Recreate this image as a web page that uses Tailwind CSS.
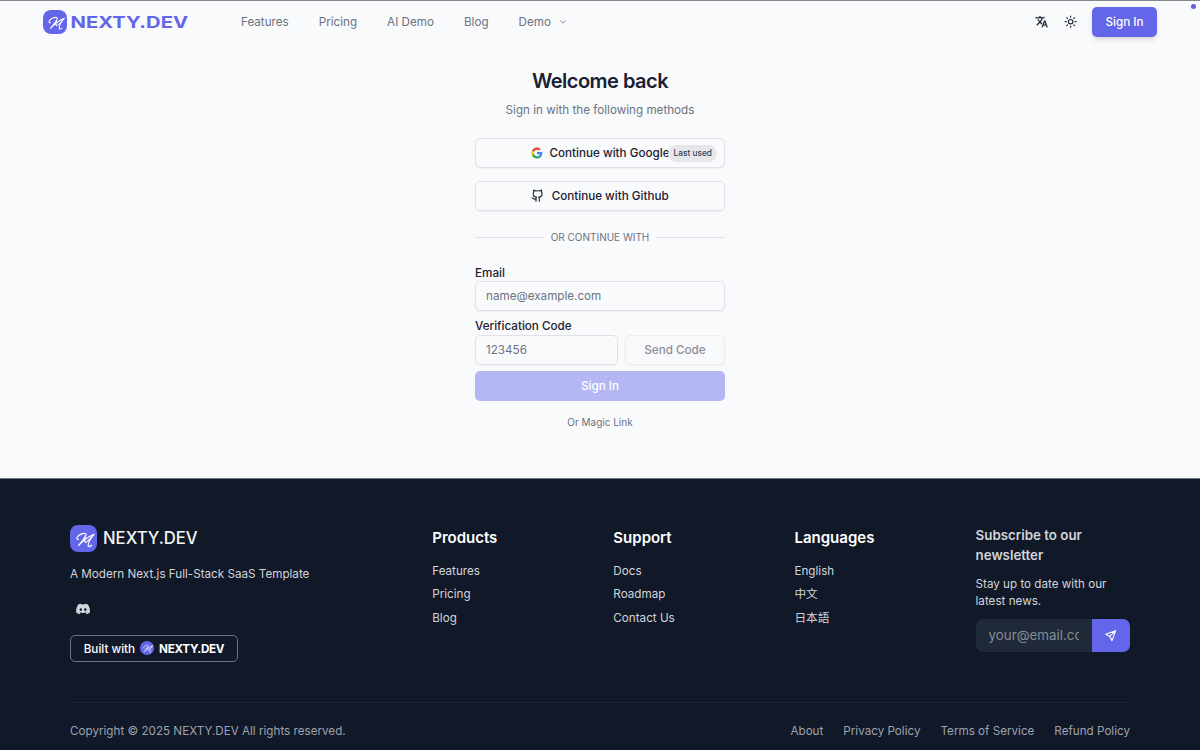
<!DOCTYPE html>
<html lang="en" class="text-[13.333px]">
<head>
    <meta charset="UTF-8">
    <meta name="viewport" content="width=device-width, initial-scale=1.0">
    <title>Sign In - NEXTY.DEV</title>
    <script src="https://cdn.jsdelivr.net/npm/@tailwindcss/browser@4"></script>
    <style>
        body {
            font-family: Inter, "Noto Sans CJK SC", sans-serif;
        }
    </style>
</head>
<body class="bg-[#f9fafc] text-[#1a2031] w-[1200px] h-[750px] overflow-hidden flex flex-col relative">

    <!-- Shared logo mark -->
    <svg class="hidden">
        <symbol id="mark" viewBox="0 0 32 32">
            <path d="M10 17C6.500 17.500 8 13 13 10.800C17.500 9 20 9.800 18.500 12.800C16.500 17 13 21 10 24.500C15 19 20 14.500 28.500 11C25.500 14.500 21.500 20.500 21.500 24C21.500 26.500 24 25.500 25.500 24M18.500 12.800C17.500 16 17 19.500 18 20.500C20 21.500 25 15 28.500 11" fill="none" stroke="#fff" stroke-width="1.4" stroke-linecap="round" stroke-linejoin="round"/>
        </symbol>
    </svg>

    <!-- Header -->
    <header class="h-[43px] shrink-0 border-t border-[#85868b] px-[43px] flex items-center">
        <a href="#" class="flex items-center w-[198px]">
            <span class="rounded-[8px] bg-[#6366e8] shrink-0 w-[24px] h-[24px]"><svg class="size-full"><use href="#mark"/></svg></span>
            <svg class="ml-[3px] w-[120px] h-[24px]" viewBox="0 0 120 24">
                <text x="0.500" y="17.500" textLength="117.500" lengthAdjust="spacingAndGlyphs" font-size="15.800" font-weight="700" fill="#6366e8">NEXTY.DEV</text>
            </svg>
        </a>
        <nav class="flex items-center gap-[30px] text-sm text-[#6b7280]">
            <a href="#">Features</a>
            <a href="#">Pricing</a>
            <a href="#">AI Demo</a>
            <a href="#">Blog</a>
            <a href="#" class="flex items-center">Demo
                <svg class="ml-[7px] mt-px size-[10px]" viewBox="0 0 24 24" fill="none" stroke="currentColor" stroke-width="2" stroke-linecap="round" stroke-linejoin="round"><path d="m6 9 6 6 6-6"/></svg>
            </a>
        </nav>
        <div class="ml-auto flex items-center">
            <svg class="size-[13.300px] mr-[15px]" viewBox="0 0 24 24" fill="currentColor" stroke="currentColor" stroke-width=".4"><path d="M12.870 15.070l-2.540-2.510.03-.03A17.520 17.520 0 0 0 14.070 6H17V4h-7V2H8v2H1v2h11.170C11.500 7.920 10.440 9.750 9 11.350 8.070 10.320 7.300 9.190 6.690 8h-2c.73 1.630 1.730 3.170 2.980 4.560l-5.090 5.020L4 19l5-5 3.110 3.110.76-2.040zM18.500 10h-2L12 22h2l1.120-3h4.750L21 22h2l-4.500-12zm-2.620 7l1.620-4.330L19.120 17h-3.240z"/></svg>
            <svg class="size-[13.300px] mr-[15px]" viewBox="0 0 24 24" fill="none" stroke="currentColor" stroke-width="2" stroke-linecap="round"><circle cx="12" cy="12" r="4"/><path d="M12 2v2M12 20v2M4.930 4.930l1.410 1.410M17.660 17.660l1.410 1.410M2 12h2M20 12h2M6.340 17.660l-1.410 1.410M19.070 4.930l-1.410 1.410"/></svg>
            <a href="#" class="h-9 w-[65px] rounded-[5px] bg-[#6366e8] text-white text-sm font-medium flex items-center justify-center shadow-md">Sign In</a>
        </div>
    </header>
    <span class="absolute top-[4px] right-[4px] size-[5px] rounded-full bg-[#5b5ee0]"></span>

    <!-- Sign in form -->
    <main class="w-[250px] mx-auto pt-[25px] h-[434.500px] shrink-0 flex flex-col">
        <h1 class="text-2xl font-semibold tracking-tight text-center leading-[27px]">Welcome back</h1>
        <p class="text-sm text-[#6b7280] text-center mt-[7px]">Sign in with the following methods</p>

        <div class="mt-[19px] grid gap-4 text-sm font-medium">
            <button class="relative h-9 rounded-[5px] border border-[#dfe1e6] shadow-xs flex items-center justify-center">
                <svg class="size-[12px] mr-[7px]" viewBox="0 0 24 24"><path fill="#4285F4" d="M22.560 12.250c0-.78-.07-1.530-.2-2.250H12v4.260h5.920c-.26 1.370-1.040 2.530-2.210 3.310v2.770h3.570c2.080-1.920 3.280-4.740 3.280-8.090z"/><path fill="#34A853" d="M12 23c2.970 0 5.460-.98 7.280-2.660l-3.570-2.770c-.98.66-2.230 1.060-3.710 1.060-2.860 0-5.290-1.930-6.160-4.530H2.180v2.840C3.990 20.530 7.700 23 12 23z"/><path fill="#FBBC05" d="M5.840 14.090c-.22-.66-.35-1.360-.35-2.090s.13-1.430.35-2.090V7.070H2.180C1.430 8.550 1 10.220 1 12s.43 3.450 1.180 4.930l3.660-2.840z"/><path fill="#EA4335" d="M12 5.380c1.620 0 3.060.56 4.210 1.640l3.150-3.150C17.450 2.090 14.970 1 12 1 7.700 1 3.990 3.470 2.180 7.070l3.660 2.840c.87-2.600 3.300-4.530 6.160-4.530z"/></svg>
                <span class="pt-px">Continue with Google</span>
                <span class="absolute right-[7px] top-[6px] h-[17px] px-[5px] rounded-full bg-[#e5e7eb] text-[8.330px] leading-[17px] text-[#374151]">Last used</span>
            </button>
            <button class="h-9 rounded-[5px] border border-[#dfe1e6] shadow-xs flex items-center justify-center">
                <svg class="size-[13.300px] mr-[7px]" viewBox="0 0 24 24" fill="none" stroke="currentColor" stroke-width="2" stroke-linecap="round" stroke-linejoin="round"><path d="M15 22v-4a4.800 4.800 0 0 0-1-3.500c3 0 6-2 6-5.500.08-1.250-.27-2.480-1-3.500.28-1.150.28-2.350 0-3.500 0 0-1 0-3 1.500-2.640-.5-5.360-.5-8 0C6 2 5 2 5 2c-.3 1.150-.3 2.350 0 3.500A5.403 5.403 0 0 0 4 9c0 3.500 3 5.500 6 5.500-.39.49-.68 1.050-.85 1.650-.17.6-.22 1.230-.15 1.850v4"/><path d="M9 18c-4.510 2-5-2-7-2"/></svg>
                Continue with Github
            </button>
        </div>

        <div class="mt-[20px] flex items-center gap-[7px] text-xs text-[#6b7280]">
            <span class="h-px flex-1 bg-[#dfe1e6]"></span>
            OR CONTINUE WITH
            <span class="h-px flex-1 bg-[#dfe1e6]"></span>
        </div>

        <form class="mt-[20px] text-sm">
            <label class="block font-medium leading-[16px] pt-px">Email</label>
            <input type="email" placeholder="name@example.com" class="block w-full h-9 rounded-[5px] border border-[#dfe1e6] px-[10px] shadow-xs placeholder:text-[#6b7280]">
            <label class="block font-medium leading-[17px] mt-[6.700px]">Verification Code</label>
            <div class="flex gap-[7px]">
                <input type="text" placeholder="123456" class="w-[143px] h-9 rounded-[5px] border border-[#dfe1e6] px-[10px] shadow-xs placeholder:text-[#6b7280]">
                <button type="button" class="flex-1 h-9 rounded-[5px] border border-[#dfe1e6] shadow-xs font-medium opacity-50">Send Code</button>
            </div>
            <button type="button" class="mt-[6.500px] w-full h-9 rounded-[5px] bg-[#b4b7f4] text-white font-medium">Sign In</button>
        </form>
        <a href="#" class="mt-[15px] text-xs text-center text-[#6b7280]">Or Magic Link</a>
    </main>

    <!-- Footer -->
    <footer class="flex-1 bg-[#111827] border-t border-[#6b7280] px-[70px] pt-[46.500px] text-[#d1d5db] text-sm">
        <div class="grid grid-cols-6 gap-8 h-[176.500px]">
            <div class="col-span-2">
                <div class="flex items-center gap-[6px] text-[16.670px] font-medium text-[#f3f4f6]">
                    <span class="size-[27px] rounded-[8px] bg-[#6366e8]"><svg class="size-full"><use href="#mark"/></svg></span>
                    <span class="pt-px">NEXTY.DEV</span>
                </div>
                <p class="mt-[14px]">A Modern Next.js Full-Stack SaaS Template</p>
                <svg class="mt-[19px] ml-[6px] size-[14px]" viewBox="0 0 24 24" fill="currentColor"><path d="M20.320 4.370a19.800 19.800 0 0 0-4.890-1.520c-.2.360-.46.860-.63 1.250a18.300 18.300 0 0 0-5.500 0c-.17-.39-.42-.89-.63-1.250a19.700 19.700 0 0 0-4.890 1.520C.7 9.050-.13 13.580.28 18.060a19.900 19.900 0 0 0 6 3.030c.48-.65.91-1.350 1.280-2.080-.7-.27-1.370-.6-2-.98l.5-.38a14.200 14.200 0 0 0 12.070 0l.5.38c-.64.38-1.300.71-2 .98.36.73.79 1.430 1.270 2.080a19.800 19.800 0 0 0 6-3.030c.5-5.180-.84-9.680-3.580-13.690zM8.200 15.330c-1.180 0-2.150-1.080-2.150-2.420S7 10.500 8.200 10.500s2.170 1.090 2.150 2.410c0 1.340-.95 2.420-2.150 2.420zm7.800 0c-1.180 0-2.150-1.080-2.150-2.420s.95-2.410 2.150-2.410 2.180 1.090 2.160 2.410c0 1.340-.95 2.420-2.160 2.420z"/></svg>
                <a href="#" class="mt-[19px] w-[168px] h-[27px] rounded-[5px] border border-[#6b7280] flex items-center justify-center text-white font-medium">
                    <span class="pt-[2px]">Built with</span>
                    <span class="mx-[5px] size-[14px] rounded-full bg-[#6366e8]"><svg class="size-full"><use href="#mark"/></svg></span>
                    <span class="font-bold tracking-[-0.3px] pt-[2px]">NEXTY.DEV</span>
                </a>
            </div>
            <div>
                <h3 class="text-[15px] leading-[23px] pt-[0.500px] font-semibold text-white">Products</h3>
                <ul class="mt-[14.300px] grid gap-[6.700px] leading-[16.670px]"><li>Features</li><li>Pricing</li><li>Blog</li></ul>
            </div>
            <div>
                <h3 class="text-[15px] leading-[23px] pt-[0.500px] font-semibold text-white">Support</h3>
                <ul class="mt-[14.300px] grid gap-[6.700px] leading-[16.670px]"><li>Docs</li><li>Roadmap</li><li>Contact Us</li></ul>
            </div>
            <div>
                <h3 class="text-[15px] leading-[23px] pt-[0.500px] font-semibold text-white">Languages</h3>
                <ul class="mt-[14.300px] grid gap-[6.700px] leading-[16.670px]"><li>English</li><li>中文</li><li>日本語</li></ul>
            </div>
            <div>
                <h3 class="text-base leading-[20px] font-semibold">Subscribe to our newsletter</h3>
                <p class="mt-[11px] leading-[16.670px]">Stay up to date with our latest news.</p>
                <div class="mt-[10px] flex h-[33px]">
                    <input type="email" placeholder="your@email.com" class="w-[116px] rounded-l-[7px] bg-[#1f2937] px-[13px] pt-px text-base placeholder:text-[#858c99]">
                    <button class="flex-1 rounded-r-[7px] bg-[#6366e8] text-white flex items-center justify-center">
                        <svg class="size-[13.300px]" viewBox="0 0 24 24" fill="none" stroke="currentColor" stroke-width="2" stroke-linecap="round" stroke-linejoin="round"><path d="M21 3 14.500 21l-4-7.500-7.500-4zM21 3 10.500 13.500"/></svg>
                    </button>
                </div>
            </div>
        </div>
        <div class="border-t border-[#1c2535] pt-[20.300px] flex text-[#9ca3af]">
            <p>Copyright © 2025 NEXTY.DEV All rights reserved.</p>
            <div class="ml-auto flex gap-[20px]">
                <a href="#">About</a>
                <a href="#">Privacy Policy</a>
                <a href="#">Terms of Service</a>
                <a href="#">Refund Policy</a>
            </div>
        </div>
    </footer>

</body>
</html>
